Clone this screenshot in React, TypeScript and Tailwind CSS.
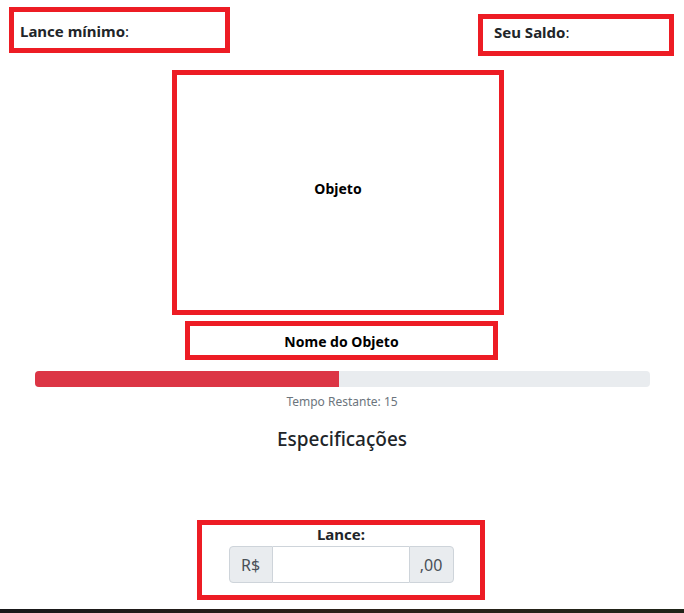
import React from 'react';

const red = 'border-[5px] border-[#ed1c24]';

export default function App() {
  const tempo = 15;
  const pct = 49.4;

  return (
    <div className="relative h-[613px] overflow-hidden bg-white text-[#212529] font-['Noto_Sans',sans-serif]">
      <div className="flex items-start justify-between">
        <div className={`${red} ml-[9px] mt-[7px] h-[46px] w-[221px] pl-[6px] pt-[7px] text-[15px] leading-6`}>
          <strong>Lance mínimo</strong>:
        </div>
        <div className={`${red} mr-[10px] mt-[14px] h-[42px] w-[196px] pl-[11px] pt-[1px] text-[15px] leading-6`}>
          <strong>Seu Saldo</strong>:
        </div>
      </div>

      <div className={`${red} ml-[172px] mt-[14px] flex h-[245px] w-[332px] items-center justify-center pb-[9px]`}>
        <span className="text-[14px] font-bold text-black">Objeto</span>
      </div>

      <div className={`${red} ml-[185px] mt-[6px] flex h-[39px] w-[313px] items-center justify-center pt-[2px]`}>
        <span className="text-[14px] font-bold text-black">Nome do Objeto</span>
      </div>

      <div className="mx-[35px] mt-[11px] flex h-4 w-[615px] overflow-hidden rounded bg-[#e9ecef]">
        <div className="h-full bg-[#dc3545]" style={{ width: `${pct}%` }} />
      </div>

      <p className="mt-[5px] text-center text-[12px] leading-[19px] text-[#6c757d]">
        Tempo Restante: {tempo}
      </p>

      <h5 className="mt-[16px] text-center text-[19px] leading-6 font-medium">Especificações</h5>

      <div className={`${red} ml-[197px] mt-[69px] flex h-[80px] w-[288px] flex-col items-center`}>
        <label className="-mt-[1px] text-[15px] font-bold leading-5">Lance:</label>
        <div className="mt-[2px] flex h-[37px] w-[225px] text-[16px] text-[#495057]">
          <span className="flex w-[44px] items-center justify-center rounded-l border border-[#ced4da] bg-[#e9ecef]">
            R$
          </span>
          <input
            type="text"
            className="min-w-0 flex-1 border-y border-[#ced4da] bg-white px-3 outline-none"
          />
          <span className="flex w-[45px] items-center justify-center rounded-r border border-[#ced4da] bg-[#e9ecef]">
            ,00
          </span>
        </div>
      </div>

      <div className="absolute bottom-0 left-0 h-[4px] w-full bg-gradient-to-r from-[#18181a] via-[#2c2018] to-[#1f2418]" />
    </div>
  );
}
